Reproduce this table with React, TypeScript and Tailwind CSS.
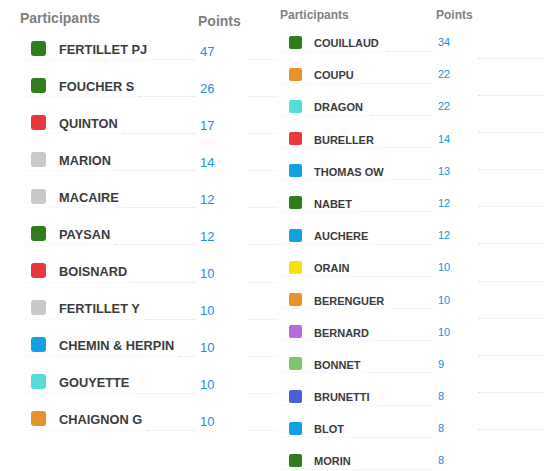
import React from "react";

const C = {
  green: "#2f7d1c",
  red: "#e8383c",
  gray: "#c9c9c9",
  blue: "#15a0e2",
  turq: "#55dcd8",
  orange: "#e8922b",
  yellow: "#f7e20c",
  purple: "#b96ad9",
  lgreen: "#7fc46c",
  indigo: "#4b5fd6",
};

const left: [string, number, string][] = [
  ["FERTILLET PJ", 47, C.green],
  ["FOUCHER S", 26, C.green],
  ["QUINTON", 17, C.red],
  ["MARION", 14, C.gray],
  ["MACAIRE", 12, C.gray],
  ["PAYSAN", 12, C.green],
  ["BOISNARD", 10, C.red],
  ["FERTILLET Y", 10, C.gray],
  ["CHEMIN & HERPIN", 10, C.blue],
  ["GOUYETTE", 10, C.turq],
  ["CHAIGNON G", 10, C.orange],
];

const right: [string, number, string][] = [
  ["COUILLAUD", 34, C.green],
  ["COUPU", 22, C.orange],
  ["DRAGON", 22, C.turq],
  ["BURELLER", 14, C.red],
  ["THOMAS OW", 13, C.blue],
  ["NABET", 12, C.green],
  ["AUCHERE", 12, C.blue],
  ["ORAIN", 10, C.yellow],
  ["BERENGUER", 10, C.orange],
  ["BERNARD", 10, C.purple],
  ["BONNET", 9, C.lgreen],
  ["BRUNETTI", 8, C.indigo],
  ["BLOT", 8, C.blue],
  ["MORIN", 8, C.green],
];

const head = { fontFamily: '"Liberation Sans", Arial, sans-serif' };
const nameFont = { fontFamily: '"Liberation Sans", Arial, sans-serif' };
const numFont = { fontFamily: '"Liberation Sans", Arial, sans-serif' };

function LeftTable() {
  return (
    <div className="flex flex-col">
      <div className="flex h-[37px] items-start font-bold text-[14px] leading-[16px] text-[#808080]" style={head}>
        <span className="ml-[20px] mt-[10px] w-[178px]">Participants</span>
        <span className="mt-[13px]">Points</span>
      </div>
      {left.map(([n, p, c]) => (
        <div key={n} className="flex h-[37.1px] items-start">
          <div className="ml-[18px] flex h-[23px] w-[177px] items-center border-b border-dotted border-[#f3f3f3]">
            <div className="ml-[13px] h-[15px] w-[15px] shrink-0 rounded-[3px]" style={{ background: c }} />
            <span
              className="ml-[13px] mt-[3px] whitespace-nowrap text-[12.8px] font-bold leading-[16px] text-[#3b3b3b]"
              style={nameFont}
            >
              {n}
            </span>
            <div className="mb-[-1px] ml-[5px] flex-1 self-stretch border-b border-dotted border-[#dedede]" />
          </div>
          <div className="flex h-[22px] w-[55px] items-center pl-[5px]">
            <span className="mt-[7px] text-[13px] leading-[16px] text-[#2290d8]" style={numFont}>
              {p}
            </span>
          </div>
          <div className="h-[23px] flex-1 border-b border-dotted border-[#e2e2e2]" />
        </div>
      ))}
    </div>
  );
}

function RightTable() {
  return (
    <div className="flex w-[202px] shrink-0 flex-col bg-white">
      <div className="flex h-[33.5px] items-start font-bold text-[12px] leading-[14px] text-[#808080]" style={head}>
        <span className="ml-[4px] mt-[8px] w-[156px]">Participants</span>
        <span className="mt-[8px]">Points</span>
      </div>
      {right.map(([n, p, c]) => (
        <div key={n} className="flex h-[32.2px] items-start">
          <div className="flex h-[18px] w-[157px] items-center border-b border-dotted border-[#f3f3f3]">
            <div className="ml-[13px] h-[13px] w-[13px] shrink-0 rounded-[2px]" style={{ background: c }} />
            <span
              className="ml-[12px] mt-[3px] whitespace-nowrap text-[11px] font-bold leading-[13px] text-[#3b3b3b]"
              style={nameFont}
            >
              {n}
            </span>
            <div className="mb-[-1px] ml-[8px] flex-1 self-stretch border-b border-dotted border-[#e2e2e2]" />
          </div>
          <div className="flex h-[17px] flex-1 items-center pl-[5px]">
            <span className="mt-[1px] text-[11px] leading-[13px] text-[#2290d8]" style={numFont}>
              {p}
            </span>
          </div>
        </div>
      ))}
    </div>
  );
}

export default function App() {
  return (
    <div className="grid h-[471px] w-[552px] grid-cols-[276px_1fr] overflow-hidden bg-white">
      <LeftTable />
      <div className="flex">
        <RightTable />
        <div className="flex flex-1 flex-col pr-[8px] pt-[58px]">
          {left.map(([n]) => (
            <div key={n} className="h-[37.1px] shrink-0 border-t border-dotted border-[#e2e2e2]" />
          ))}
        </div>
      </div>
    </div>
  );
}
